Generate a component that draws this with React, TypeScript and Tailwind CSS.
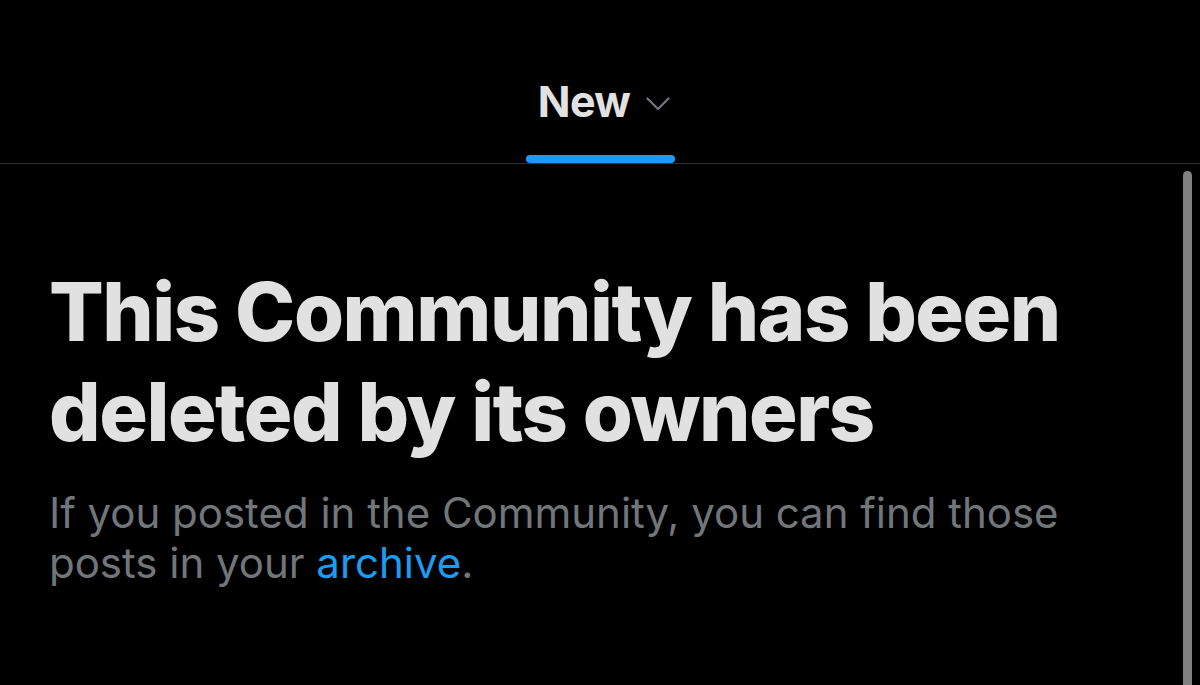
import React from "react";

export default function App() {
  return (
    <div
      className="relative w-[1200px] h-[685px] overflow-hidden bg-black"
      style={{ fontFamily: "Inter, 'Noto Sans', sans-serif" }}
    >
      <div className="h-[164px] border-b border-[#2f3336] flex justify-center items-end">
        <div className="flex flex-col items-center">
          <div className="flex items-center gap-[16px] pl-[8px]">
            <span className="text-[43px] leading-[53px] font-bold text-[#e1e1e1] tracking-[-0.6px]">New</span>
            <svg width="24" height="14" viewBox="0 0 24 14" fill="none" className="mt-[4px]">
              <path d="M1.5 1.5 L12 12 L22.5 1.5" stroke="#71767b" strokeWidth="2.2" strokeLinecap="round" strokeLinejoin="round" />
            </svg>
          </div>
          <div className="mt-[27px] h-2 w-[149px] rounded-full bg-[#1d9bf0]" />
        </div>
      </div>

      <div className="pl-[49px] pr-[120px] pt-[98px]">
        <h1 className="text-[81px] leading-[100px] font-extrabold text-[#e1e1e1] tracking-[-1.45px]">
          This Community has been deleted by its owners
        </h1>
        <p className="mt-[26px] text-[42px] leading-[50px] text-[#71767b] tracking-[-0.02px]">
          If you posted in the Community, you can find those posts in your{" "}
          <span className="text-[#1d9bf0]">archive</span>.
        </p>
      </div>

      <div className="absolute left-[1183px] top-[171px] w-[9px] h-[540px] rounded-full bg-[#808080]" />
    </div>
  );
}
